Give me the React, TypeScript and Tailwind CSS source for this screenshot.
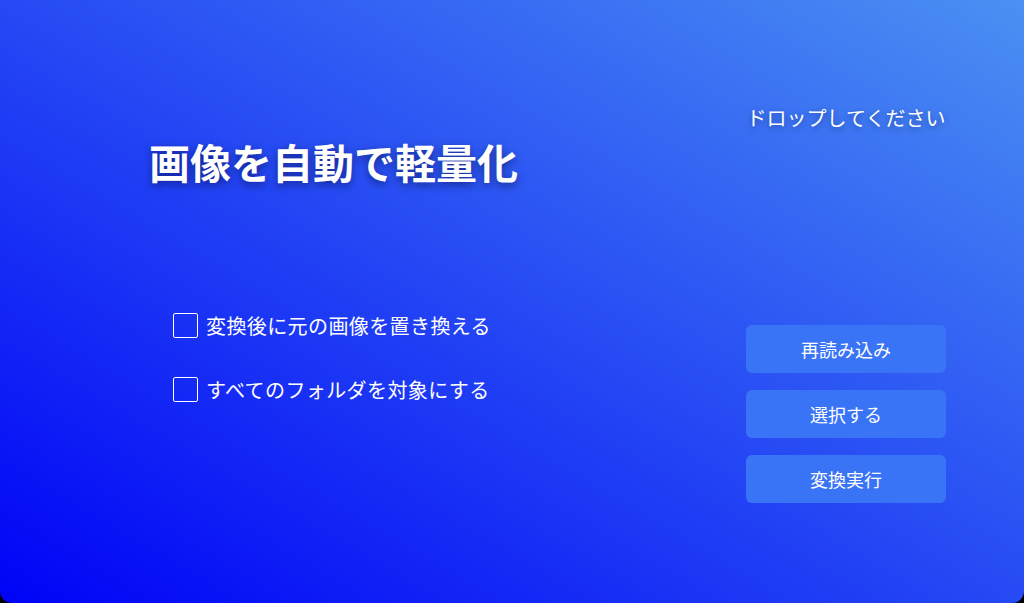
/*
 * Image compressor window: title + options on the left, drop hint and
 * action buttons on the right, over a blue diagonal gradient.
 */
import { useState } from 'react'

const OPTIONS = [
  { id: 'replace', label: '変換後に元の画像を置き換える' },
  { id: 'all', label: 'すべてのフォルダを対象にする' },
]

const ACTIONS = ['再読み込み', '選択する', '変換実行']

const FONT = "font-['Noto_Sans_CJK_JP','Noto_Sans',sans-serif]"

export default function App() {
  const [checked, setChecked] = useState<Record<string, boolean>>({})

  return (
    <div className={`h-screen w-full overflow-hidden bg-black ${FONT}`}>
      <div className="flex h-full justify-between rounded-b-[12px] bg-[linear-gradient(to_top_right,#0003f6,#4b90f2)] text-white">
        {/* left column */}
        <div className="flex flex-col pl-[149px] pt-[137px]">
          <h1 className="text-[41px] leading-[48px] font-bold [text-shadow:0_3px_8px_rgba(0,0,40,0.5)]">
            画像を自動で軽量化
          </h1>
          <div className="mt-[128px] flex flex-col gap-[39px] pl-[24px]">
            {OPTIONS.map((o) => (
              <label key={o.id} className="flex cursor-pointer items-center gap-[8px]">
                <button
                  type="button"
                  onClick={() => setChecked((c) => ({ ...c, [o.id]: !c[o.id] }))}
                  className="flex size-[25px] items-center justify-center rounded-[2px] border-[1.5px] border-white"
                >
                  {checked[o.id] && (
                    <svg viewBox="0 0 16 16" className="size-4" fill="none" stroke="white" strokeWidth="2">
                      <path d="M3 8.5l3.2 3L13 4.5" />
                    </svg>
                  )}
                </button>
                <span className="text-[20px] leading-[25px] tracking-[0.4px]">{o.label}</span>
              </label>
            ))}
          </div>
        </div>

        {/* right column */}
        <div className="mr-[78px] flex w-[200px] flex-col pt-[106px]">
          <div className="flex justify-center whitespace-nowrap text-[20px] leading-[24px] [text-shadow:0_2px_6px_rgba(0,0,40,0.4)]">
            ドロップしてください
          </div>
          <div className="mt-[195px] flex flex-col gap-[17px]">
            {ACTIONS.map((a) => (
              <button
                key={a}
                className="h-[48px] w-full rounded-[6px] bg-[#3a74f6] text-[18px] text-white hover:bg-[#4680f8]"
              >
                {a}
              </button>
            ))}
          </div>
        </div>
      </div>
    </div>
  )
}
